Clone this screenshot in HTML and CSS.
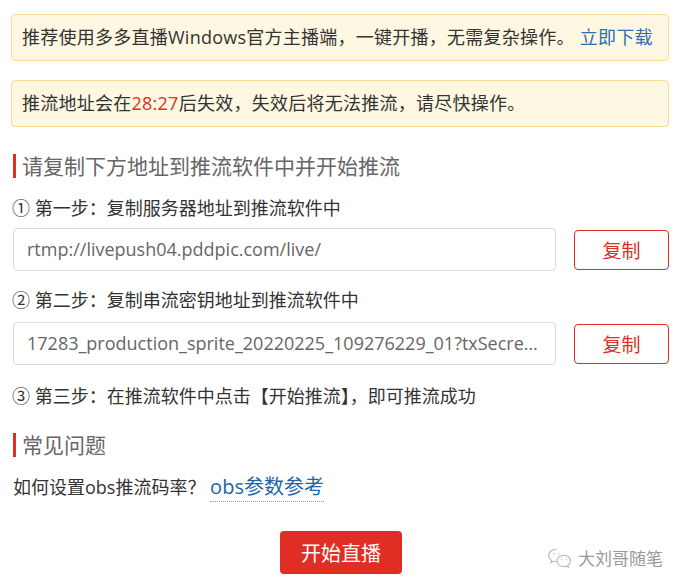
FILE: index.html
```html
<html><head><meta charset="utf-8"><link rel="stylesheet" href="styles.css"></head><body>
  <div class="page">
    <div class="notice">推荐使用多多直播Windows官方主播端，一键开播，无需复杂操作。 <a class="notice-link">立即下载</a></div>
    <div class="notice notice-gap">推流地址会在<span class="countdown">28:27</span>后失效，失效后将无法推流，请尽快操作。</div>

    <h2 class="section-title">请复制下方地址到推流软件中并开始推流</h2>

    <p class="step step-first">① 第一步：复制服务器地址到推流软件中</p>
    <div class="copy-row">
      <div class="field">rtmp://livepush04.pddpic.com/live/</div>
      <button class="copy-btn">复制</button>
    </div>

    <p class="step">② 第二步：复制串流密钥地址到推流软件中</p>
    <div class="copy-row copy-row-key">
      <div class="field">17283_production_sprite_20220225_109276229_01?txSecret=8c1f0e2a9b7d4c36&amp;txTime=621A4F3B</div>
      <button class="copy-btn">复制</button>
    </div>

    <p class="step step-last">③ 第三步：在推流软件中点击【开始推流】，即可推流成功</p>

    <h2 class="section-title faq-title">常见问题</h2>
    <p class="faq">如何设置obs推流码率？ <a class="faq-link">obs参数参考</a></p>

    <div class="actions">
      <button class="start-btn">开始直播</button>
    </div>
  </div>

  <div class="watermark">
    <svg class="wm-icon" width="26" height="22" viewBox="0 0 26 22" fill="none" stroke="#b5b5b5" stroke-width="1.1">
      <path d="M9.5 2.2c-4.4 0-7.8 2.8-7.8 6.3 0 2 1.1 3.7 2.9 4.9l-.7 2.2 2.6-1.3c.9.3 1.9.4 3 .4"/>
      <circle cx="6.8" cy="6.8" r=".7" fill="#b5b5b5" stroke="none"/>
      <circle cx="12" cy="6.8" r=".7" fill="#b5b5b5" stroke="none"/>
      <path d="M17 8.3c-4 0-7 2.5-7 5.6s3 5.6 7 5.6c.8 0 1.6-.1 2.3-.3l2.2 1.1-.6-1.9c1.5-1 2.6-2.7 2.6-4.5 0-3.1-3-5.6-6.5-5.6z"/>
      <circle cx="14.6" cy="12.6" r=".6" fill="#b5b5b5" stroke="none"/>
      <circle cx="19.2" cy="12.6" r=".6" fill="#b5b5b5" stroke="none"/>
    </svg>
    <span>大刘哥随笔</span>
  </div>
</body></html>
```

FILE: styles.css
```css
body {
  margin: 0;
  background: #fff;
  color: #333;
  font-family: "Open Sans", "Noto Sans CJK SC", sans-serif;
  font-size: 18px;
}
.page {
  position: relative;
  padding: 14px 15px 0 11px;
}
.notice {
  background: #fef7e2;
  border: 1px solid #fadd95;
  border-radius: 4px;
  padding: 10px 10px;
  line-height: 25px;
  letter-spacing: 0.25px;
  color: #333;
}
.notice-gap { margin-top: 19px; }
.notice-link { color: #2e6db4; }
.countdown { color: #e02e24; }

.section-title {
  margin: 27px 0 0 2px;
  padding-left: 6px;
  border-left: 3px solid #e02e24;
  font-size: 21px;
  font-weight: 400;
  line-height: 24px;
  color: #666;
}
.faq-title { margin-top: 25px; }

.step {
  margin: 17px 0 0 1px;
  line-height: 24px;
}
.step-first { margin-top: 18px; }
.step-last { margin-top: 19px; }

.copy-row {
  display: flex;
  align-items: center;
  gap: 18px;
  margin: 8px 0 0 2px;
}
.copy-row-key { margin-top: 10px; }
.field {
  flex: 1;
  min-width: 0;
  height: 41px;
  line-height: 41px;
  padding: 0 12px 0 13px;
  border: 1px solid #dcdcdc;
  border-radius: 4px;
  color: #666;
  white-space: nowrap;
  overflow: hidden;
  text-overflow: ellipsis;
}
.copy-btn {
  width: 95px;
  height: 40px;
  background: #fff;
  border: 1px solid #e02e24;
  border-radius: 4px;
  color: #e02e24;
  font: inherit;
  font-size: 19px;
}

.faq {
  margin: 16px 0 0 2px;
  line-height: 28px;
}
.faq-link {
  color: #2563a8;
  font-size: 20px;
  border-bottom: 1px dotted #999;
  padding-bottom: 1px;
}

.actions {
  display: flex;
  justify-content: center;
  margin-top: 30px;
  padding-left: 2px;
}
.start-btn {
  width: 122px;
  height: 43px;
  background: #e02e24;
  border: none;
  border-radius: 4px;
  color: #fff;
  font: inherit;
  font-size: 20px;
}

.watermark {
  position: absolute;
  left: 547px;
  top: 545px;
  display: flex;
  align-items: center;
  gap: 5px;
  color: #9a9a9a;
  font-size: 17px;
}
```
